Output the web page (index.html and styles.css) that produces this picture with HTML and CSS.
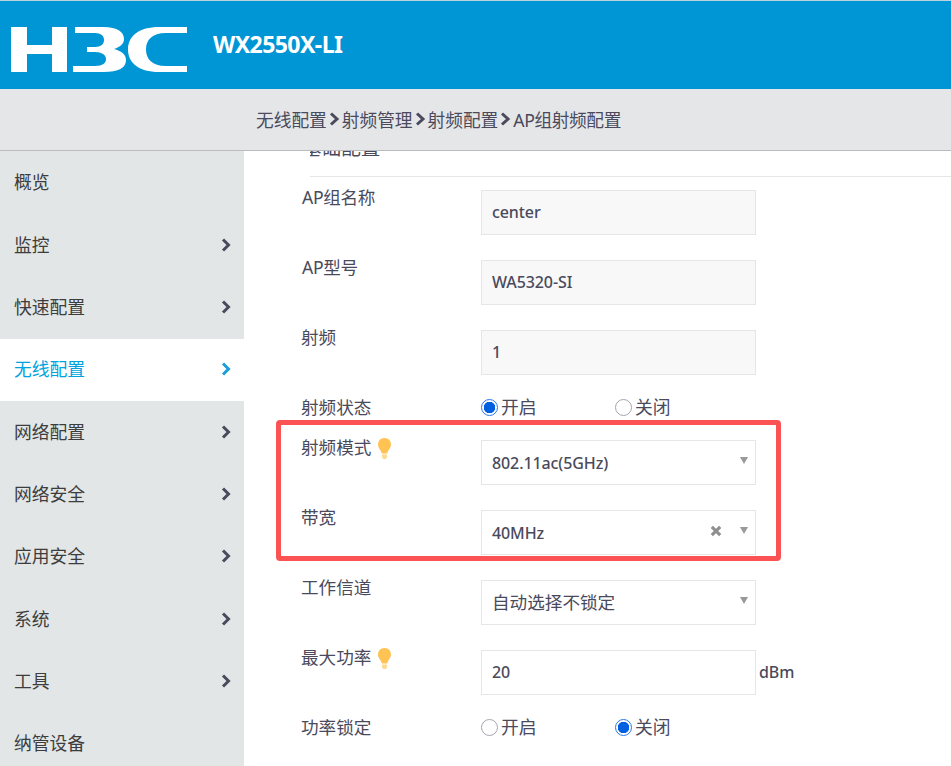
FILE: index.html
```html
<!DOCTYPE html>
<html lang="zh">
<head>
<meta charset="utf-8">
<title>H3C WX2550X-LI</title>
<link rel="stylesheet" href="styles.css">
</head>
<body>
<header class="topbar">
  <svg class="logo" viewBox="0 0 176 45" width="176" height="45" aria-label="H3C">
    <path fill="#fff" d="M0 0H16V18H41V0H56V45H41V27H16V45H0Z"/>
    <path fill="#fff" d="M64 0H92C107 0 113 5 113 12C113 17 109 20 103 22C110 24 115 27 115 33C115 41 108 45 92 45H62V39H84C92 39 95 36 95 32C95 28 91 25 84 25H76V20H84C90 20 93 17 93 13C93 9 90 6 84 6H64Z"/>
    <path fill="#fff" d="M176 0V6H155C141 6 135 13 135 22.5C135 32 141 39 155 39H176V45H148C128 45 117 36 117 22.5C117 9 128 0 148 0Z"/>
  </svg>
  <span class="model">WX2550X-LI</span>
</header>
<nav class="crumbs">
  <span>无线配置</span><svg class="sep" viewBox="0 0 13 14"><path d="M3 1.5L9 7L3 12.5"/></svg>
  <span>射频管理</span><svg class="sep" viewBox="0 0 13 14"><path d="M3 1.5L9 7L3 12.5"/></svg>
  <span>射频配置</span><svg class="sep" viewBox="0 0 13 14"><path d="M3 1.5L9 7L3 12.5"/></svg>
  <span class="tight">AP组射频配置</span>
</nav>
<div class="body">
  <aside class="side">
    <a class="item">概览</a>
    <a class="item">监控<svg class="chev" viewBox="0 0 10 14"><path d="M2 1.5L7.5 7L2 12.5"/></svg></a>
    <a class="item">快速配置<svg class="chev" viewBox="0 0 10 14"><path d="M2 1.5L7.5 7L2 12.5"/></svg></a>
    <a class="item active">无线配置<svg class="chev" viewBox="0 0 10 14"><path d="M2 1.5L7.5 7L2 12.5"/></svg></a>
    <a class="item">网络配置<svg class="chev" viewBox="0 0 10 14"><path d="M2 1.5L7.5 7L2 12.5"/></svg></a>
    <a class="item">网络安全<svg class="chev" viewBox="0 0 10 14"><path d="M2 1.5L7.5 7L2 12.5"/></svg></a>
    <a class="item">应用安全<svg class="chev" viewBox="0 0 10 14"><path d="M2 1.5L7.5 7L2 12.5"/></svg></a>
    <a class="item">系统<svg class="chev" viewBox="0 0 10 14"><path d="M2 1.5L7.5 7L2 12.5"/></svg></a>
    <a class="item">工具<svg class="chev" viewBox="0 0 10 14"><path d="M2 1.5L7.5 7L2 12.5"/></svg></a>
    <a class="item">纳管设备</a>
  </aside>
  <main class="content">
    <div class="section"><span class="section-title">基础配置</span></div>
    <div class="row">
      <label class="lbl tight">AP组名称</label>
      <div class="field ro">center</div>
    </div>
    <div class="row">
      <label class="lbl tight">AP型号</label>
      <div class="field ro">WA5320-SI</div>
    </div>
    <div class="row">
      <label class="lbl">射频</label>
      <div class="field ro">1</div>
    </div>
    <div class="row radio-row">
      <label class="lbl">射频状态</label>
      <div class="radios">
        <span class="radio"><i class="dot on"></i>开启</span>
        <span class="radio"><i class="dot"></i>关闭</span>
      </div>
    </div>
    <div class="row">
      <label class="lbl">射频模式<svg class="bulb" viewBox="0 0 13 21"><path d="M6.5 0C2.8 0 0 2.8 0 6.5C0 10 3 12 3.8 15.5H9.2C10 12 13 10 13 6.5C13 2.8 10.2 0 6.5 0Z"/><path class="base" d="M4 16.5H9V19L8 21H5L4 19Z"/></svg></label>
      <div class="field low">802.11ac(5GHz)<i class="caret"></i></div>
    </div>
    <div class="row">
      <label class="lbl">带宽</label>
      <div class="field low">40MHz<svg class="clear" viewBox="0 0 10 10"><path d="M1.5 1.5L8.5 8.5M8.5 1.5L1.5 8.5"/></svg><i class="caret"></i></div>
    </div>
    <div class="row">
      <label class="lbl">工作信道</label>
      <div class="field cjk">自动选择不锁定<i class="caret"></i></div>
    </div>
    <div class="row">
      <label class="lbl">最大功率<svg class="bulb" viewBox="0 0 13 21"><path d="M6.5 0C2.8 0 0 2.8 0 6.5C0 10 3 12 3.8 15.5H9.2C10 12 13 10 13 6.5C13 2.8 10.2 0 6.5 0Z"/><path class="base" d="M4 16.5H9V19L8 21H5L4 19Z"/></svg></label>
      <div class="field">20</div>
      <span class="unit">dBm</span>
    </div>
    <div class="row radio-row">
      <label class="lbl">功率锁定</label>
      <div class="radios">
        <span class="radio"><i class="dot"></i>开启</span>
        <span class="radio"><i class="dot on"></i>关闭</span>
      </div>
    </div>
    <div class="highlight"></div>
  </main>
</div>
</body>
</html>
```

FILE: styles.css
```css
* { box-sizing: border-box; }
html, body { margin: 0; height: 100%; overflow: hidden; }
body {
  font-family: "Noto Sans", "Noto Sans CJK SC", sans-serif;
  font-size: 16px;
  font-weight: 500;
  letter-spacing: -.1px;
  color: #4a4a5c;
  background: #fff;
  display: flex;
  flex-direction: column;
}
.topbar {
  height: 89px;
  flex: none;
  background: #0096d6;
  border-top: 1px solid #b9d3df;
  display: flex;
  align-items: center;
  padding-left: 11px;
  gap: 26px;
}
.logo { display: block; margin-top: 9px; flex: none; }
.model {
  color: #fff;
  font-size: 24px;
  font-weight: 700;
  margin-top: -4px;
  letter-spacing: -.6px;
  transform: scaleX(.96);
  transform-origin: left center;
}
.crumbs {
  height: 62px;
  flex: none;
  background: #e4e6e8;
  border-bottom: 1px solid #b9bbbc;
  display: flex;
  align-items: center;
  padding: 0 0 1px 256px;
  font-size: 17.7px;
  font-weight: 400;
  letter-spacing: 0;
  gap: 1px;
}
.sep { width: 13px; height: 14px; fill: none; stroke: #4a4a5c; stroke-width: 3; }
.crumbs .tight { letter-spacing: -.4px; }
.body { flex: 1; display: flex; min-height: 0; }
.side { width: 244px; flex: none; background: #e2e6e7; overflow: hidden; padding-top: 1px; }
.item {
  height: 62.35px;
  display: flex;
  align-items: center;
  justify-content: space-between;
  padding: 0 13px 4px 14px;
  font-size: 17.8px;
  font-weight: 400;
  letter-spacing: 0;
  color: #3d3d3d;
}
.item.active { background: #fff; color: #00a3e0; }
.chev { width: 10px; height: 14px; margin-top: 2px; fill: none; stroke: #4a4a5c; stroke-width: 3; }
.active .chev { stroke: #1a9fdc; }
.content { position: relative; flex: 1; overflow: hidden; }
.section {
  height: 26px;
  margin-left: 66px;
  border-bottom: 1px solid #e6e6e6;
  position: relative;
  overflow: hidden;
}
.section-title { position: absolute; left: -8px; top: -19px; font-size: 19.6px; font-weight: 400; letter-spacing: 0; }
.row {
  display: flex;
  align-items: flex-start;
  padding-left: 57px;
  height: 70px;
}
.section + .row { margin-top: 13px; }
.row.radio-row { height: 40px; }
.lbl {
  width: 180px;
  flex: none;
  font-size: 17.6px;
  font-weight: 400;
  letter-spacing: 0;
  line-height: 24px;
  display: flex;
  align-items: center;
  gap: 7px;
  height: 24px;
  margin-top: -5px;
}
.lbl.tight { letter-spacing: -.3px; padding-left: 1px; }
.field {
  width: 275px;
  height: 45px;
  flex: none;
  border: 1px solid #e6e6e6;
  padding: 0 10px 2px;
  display: flex;
  align-items: center;
  position: relative;
}
.field.ro { background: #f8f8f8; }
.field.low { padding-bottom: 0; }
.field.cjk { font-size: 17.6px; font-weight: 400; letter-spacing: 0; }
.caret {
  position: absolute;
  right: 7px;
  top: 16px;
  width: 0;
  height: 0;
  border-left: 4px solid transparent;
  border-right: 4px solid transparent;
  border-top: 7px solid #999;
}
.clear { position: absolute; right: 33px; top: 14px; width: 12px; height: 12px; fill: none; stroke: #8f8f8f; stroke-width: 2.6; }
.bulb { width: 13px; height: 21px; flex: none; margin-top: 2px; fill: #ffc354; }
.base { fill: #ffd98f; }
.unit { margin-left: 3px; margin-top: 11px; }
.radios { display: flex; font-size: 17.8px; font-weight: 400; letter-spacing: 0; margin-top: -5px; }
.radio { width: 134px; display: flex; align-items: center; gap: 3px; line-height: 24px; }
.dot { width: 17px; height: 17px; border: 1px solid #a5a5b0; border-radius: 50%; flex: none; background: #fff; }
.dot.on { border-color: #2a78e4; background: radial-gradient(circle, #0060df 0 5.5px, #fff 6px); }
.highlight {
  position: absolute;
  left: 32px;
  top: 269px;
  width: 505px;
  height: 141px;
  border: 5px solid #fb5353;
  border-radius: 4px;
  pointer-events: none;
}
```
